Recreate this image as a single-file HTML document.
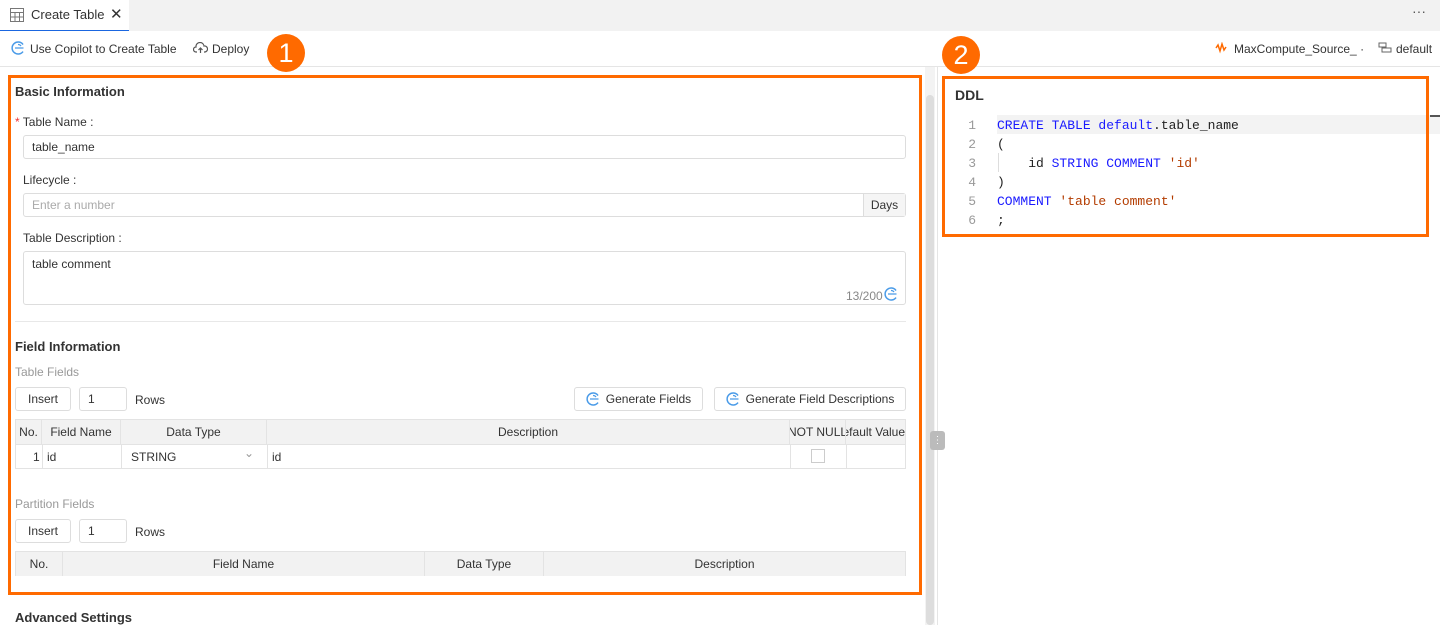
<!DOCTYPE html>
<html><head><meta charset="utf-8"><style>
*{box-sizing:border-box;margin:0;padding:0}
body{width:1440px;height:625px;overflow:hidden;background:#fff;font-family:"Liberation Sans",sans-serif;font-size:12px;color:#333;position:relative}
.a{position:absolute}
.inp{position:absolute;border:1px solid #ddd;border-radius:3px;background:#fff;padding-left:8px;display:flex;align-items:center}
.btn{position:absolute;border:1px solid #ddd;border-radius:3px;background:#fff;display:flex;align-items:center;justify-content:center}
.orange{position:absolute;border:3px solid #ff6a00}
.circ{position:absolute;width:38px;height:38px;border-radius:50%;background:#ff6a00;color:#fff;font-size:27px;display:flex;align-items:center;justify-content:center}
.th{position:absolute;background:#f2f2f2;border-right:1px solid #e3e3e3;display:flex;align-items:center;justify-content:center;height:24px}
.code{font-family:"Liberation Mono",monospace;font-size:13px}
.kw{color:#1a1aff}.st{color:#b33c00}
.ic{margin-right:6px}
</style></head><body>
<div class="a" style="left:0;top:0;width:1440px;height:31px;background:#f2f2f2"></div>
<div class="a" style="left:0;top:0;width:129px;height:31px;background:#fff;border-bottom:1px solid #1a66e0"></div>
<svg class="a" style="left:10px;top:8px" width="14" height="14" viewBox="0 0 14 14"><rect x="0.5" y="0.5" width="13" height="13" fill="none" stroke="#777"/><path d="M0 4.5H14M0 9H14M5 4.5V14M9.5 4.5V14" stroke="#777"/></svg>
<div class="a" style="left:31px;top:7px;font-size:13px">Create Table</div>
<div class="a" style="left:110px;top:5px;font-size:15px">✕</div>
<div class="a" style="left:1412px;top:3px;font-size:14px;color:#555">···</div>
<div class="a" style="left:0;top:66px;width:1440px;height:1px;background:#e5e5e5"></div>
<svg class="a" style="left:11px;top:41px" width="14" height="14" viewBox="0 0 14 14"><path d="M12 3.5A6 6 0 1 0 12 10.5" fill="none" stroke="#4a9be8" stroke-width="1.5"/><path d="M4 7H12.5M7 3.5A3.5 3.5 0 0 1 10 5" fill="none" stroke="#4a9be8" stroke-width="1.3"/></svg>
<div class="a" style="left:30px;top:42px">Use Copilot to Create Table</div>
<svg class="a" style="left:193px;top:42px" width="15" height="12" viewBox="0 0 15 12"><path d="M4 10H3A2.5 2.5 0 0 1 3 5 4 4 0 0 1 11 4 3 3 0 0 1 12 10H11M7.5 11V6M5.5 8L7.5 6 9.5 8" fill="none" stroke="#555" stroke-width="1.2"/></svg>
<div class="a" style="left:212px;top:42px">Deploy</div>
<div class="circ" style="left:267px;top:34px">1</div>
<svg class="a" style="left:1215px;top:42px" width="12" height="12" viewBox="0 0 12 12"><path d="M1 6L3 3 5 9 7 2 9 8 11 5" fill="none" stroke="#ff6a00" stroke-width="1.5"/></svg>
<div class="a" style="left:1234px;top:42px">MaxCompute_Source_ ·</div>
<svg class="a" style="left:1378px;top:42px" width="14" height="12" viewBox="0 0 14 12"><path d="M1 1H8V5H1ZM4 5V10H13V6H4" fill="none" stroke="#666"/></svg>
<div class="a" style="left:1396px;top:42px">default</div>

<div class="a" style="left:925px;top:67px;width:10px;height:558px;background:#f3f3f3"></div>
<div class="a" style="left:926px;top:95px;width:8px;height:530px;background:#ddd;border-radius:4px"></div>
<div class="a" style="left:937px;top:67px;width:1px;height:558px;background:#e5e5e5"></div>
<div class="a" style="left:930px;top:431px;width:15px;height:19px;background:#bbb;border-radius:3px;color:#fff;text-align:center;font-size:10px;line-height:19px">⋮</div>

<div class="orange" style="left:8px;top:75px;width:914px;height:520px"></div>
<div class="a" style="left:15px;top:84px;font-size:13px;font-weight:bold">Basic Information</div>
<div class="a" style="left:15px;top:115px"><span style="color:#e33">*</span> Table Name :</div>
<div class="inp" style="left:23px;top:135px;width:883px;height:24px">table_name</div>
<div class="a" style="left:23px;top:173px">Lifecycle :</div>
<div class="inp" style="left:23px;top:193px;width:883px;height:24px;color:#aaa">Enter a number</div>
<div class="a" style="left:863px;top:194px;width:42px;height:22px;background:#f5f5f5;border-left:1px solid #ddd;display:flex;align-items:center;justify-content:center">Days</div>
<div class="a" style="left:23px;top:231px">Table Description :</div>
<div class="inp" style="left:23px;top:251px;width:883px;height:54px;align-items:flex-start;padding-top:5px">table comment</div>
<div class="a" style="left:846px;top:289px;color:#888">13/200</div>
<svg class="a" style="left:884px;top:287px" width="14" height="14" viewBox="0 0 14 14"><path d="M12 3.5A6 6 0 1 0 12 10.5" fill="none" stroke="#4a9be8" stroke-width="1.5"/><path d="M4 7H12.5M7 3.5A3.5 3.5 0 0 1 10 5" fill="none" stroke="#4a9be8" stroke-width="1.3"/></svg>
<div class="a" style="left:15px;top:321px;width:891px;height:1px;background:#e8e8e8"></div>
<div class="a" style="left:15px;top:339px;font-size:13px;font-weight:bold">Field Information</div>
<div class="a" style="left:15px;top:365px;color:#999">Table Fields</div>
<div class="btn" style="left:15px;top:387px;width:56px;height:24px">Insert</div>
<div class="inp" style="left:79px;top:387px;width:48px;height:24px">1</div>
<div class="a" style="left:135px;top:393px">Rows</div>
<div class="btn" style="left:574px;top:387px;width:129px;height:24px"><svg class="ic" width="14" height="14" viewBox="0 0 14 14"><path d="M12 3.5A6 6 0 1 0 12 10.5" fill="none" stroke="#4a9be8" stroke-width="1.5"/><path d="M4 7H12.5M7 3.5A3.5 3.5 0 0 1 10 5" fill="none" stroke="#4a9be8" stroke-width="1.3"/></svg>Generate Fields</div>
<div class="btn" style="left:714px;top:387px;width:192px;height:24px"><svg class="ic" width="14" height="14" viewBox="0 0 14 14"><path d="M12 3.5A6 6 0 1 0 12 10.5" fill="none" stroke="#4a9be8" stroke-width="1.5"/><path d="M4 7H12.5M7 3.5A3.5 3.5 0 0 1 10 5" fill="none" stroke="#4a9be8" stroke-width="1.3"/></svg>Generate Field Descriptions</div>
<div class="a" style="left:15px;top:419px;width:891px;height:50px;border:1px solid #e3e3e3"></div>
<div class="th" style="left:16px;top:420px;width:26px">No.</div>
<div class="th" style="left:42px;top:420px;width:79px">Field Name</div>
<div class="th" style="left:121px;top:420px;width:146px">Data Type</div>
<div class="th" style="left:267px;top:420px;width:523px">Description</div>
<div class="th" style="left:790px;top:420px;width:56px;overflow:hidden;white-space:nowrap">NOT NULL</div>
<div class="th" style="left:846px;top:420px;width:59px;overflow:hidden;white-space:nowrap;justify-content:flex-end;border:0">Default Value</div>
<div class="a" style="left:16px;top:444px;width:889px;height:1px;background:#e3e3e3"></div>
<div class="a" style="left:33px;top:450px">1</div>
<div class="a" style="left:42px;top:444px;width:1px;height:24px;background:#e3e3e3"></div>
<div class="a" style="left:47px;top:450px">id</div>
<div class="a" style="left:121px;top:444px;width:1px;height:24px;background:#e3e3e3"></div>
<div class="a" style="left:131px;top:450px">STRING</div>
<div class="a" style="left:244px;top:446px;color:#999">⌄</div>
<div class="a" style="left:267px;top:444px;width:1px;height:24px;background:#e3e3e3"></div>
<div class="a" style="left:272px;top:450px">id</div>
<div class="a" style="left:790px;top:444px;width:1px;height:24px;background:#e3e3e3"></div>
<div class="a" style="left:811px;top:449px;width:14px;height:14px;border:1px solid #ccc"></div>
<div class="a" style="left:846px;top:444px;width:1px;height:24px;background:#e3e3e3"></div>
<div class="a" style="left:15px;top:497px;color:#999">Partition Fields</div>
<div class="btn" style="left:15px;top:519px;width:56px;height:24px">Insert</div>
<div class="inp" style="left:79px;top:519px;width:48px;height:24px">1</div>
<div class="a" style="left:135px;top:525px">Rows</div>
<div class="a" style="left:15px;top:551px;width:891px;height:25px;border:1px solid #e3e3e3"></div>
<div class="th" style="left:16px;top:552px;width:47px">No.</div>
<div class="th" style="left:63px;top:552px;width:362px">Field Name</div>
<div class="th" style="left:425px;top:552px;width:119px">Data Type</div>
<div class="th" style="left:544px;top:552px;width:361px;border:0">Description</div>
<div class="a" style="left:15px;top:610px;font-size:13px;font-weight:bold">Advanced Settings</div>

<div class="circ" style="left:942px;top:36px">2</div>
<div class="a" style="left:997px;top:115px;width:443px;height:19px;background:#f3f3f3"></div>
<div class="a" style="left:1430px;top:115px;width:10px;height:2px;background:#555"></div>
<div class="orange" style="left:942px;top:76px;width:487px;height:161px"></div>
<div class="a" style="left:955px;top:87px;font-size:14px;font-weight:bold;color:#333">DDL</div>
<div class="a code" style="left:955px;top:116px;line-height:19px;color:#999;text-align:right;width:21px">1<br>2<br>3<br>4<br>5<br>6</div>
<div class="a" style="left:998px;top:153px;width:1px;height:19px;background:#ddd"></div>
<div class="a code" style="left:997px;top:116px;line-height:19px;white-space:pre;color:#222"><span class="kw">CREATE TABLE default</span>.table_name
(
    id <span class="kw">STRING COMMENT</span> <span class="st">'id'</span>
)
<span class="kw">COMMENT</span> <span class="st">'table comment'</span>
;</div>
</body></html>
